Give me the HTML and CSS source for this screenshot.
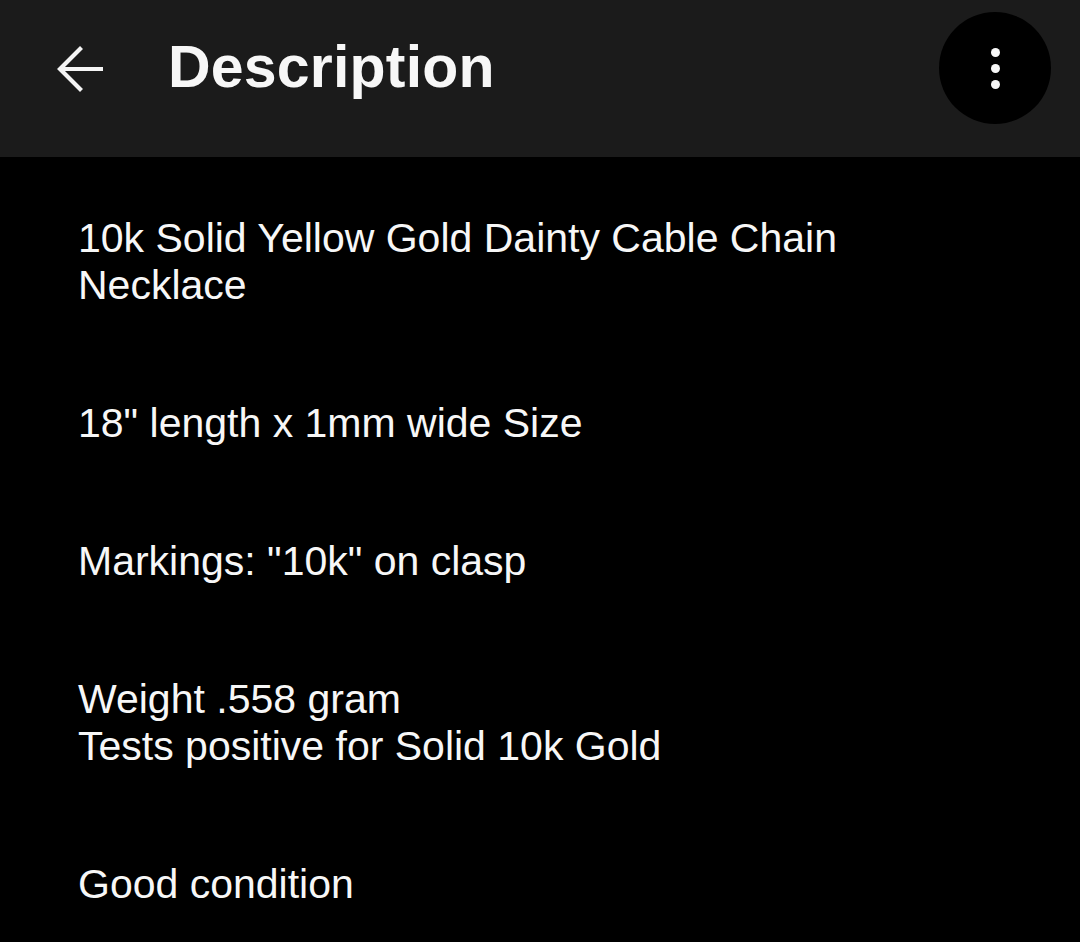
FILE: index.html
```html
<!DOCTYPE html>
<html lang="en">
<head>
<meta charset="utf-8">
<title>Description</title>
<link rel="stylesheet" href="styles.css">
</head>
<body>
<header class="topbar">
  <button class="back" aria-label="Back">
    <svg width="48" height="48" viewBox="0 0 48 48" fill="none" stroke="#f5f5f5" stroke-width="4.2" stroke-linecap="butt" stroke-linejoin="miter">
      <path d="M3 25 H46"/>
      <path d="M24.5 3.5 L3 25 L24.5 46.5"/>
    </svg>
  </button>
  <h1 class="title">Description</h1>
  <button class="more" aria-label="More options">
    <span class="dot"></span><span class="dot"></span><span class="dot"></span>
  </button>
</header>
<main class="content">
  <p>10k Solid Yellow Gold Dainty Cable Chain Necklace</p>
  <p>18" length x 1mm wide Size</p>
  <p>Markings: "10k" on clasp</p>
  <p>Weight .558 gram<br>Tests positive for Solid 10k Gold</p>
  <p>Good condition</p>
</main>
</body>
</html>
```
FILE: styles.css
```css
html, body {
  margin: 0;
  padding: 0;
  background: #000;
  width: 1080px;
  height: 942px;
  overflow: hidden;
}
body {
  font-family: "Liberation Sans", Arial, sans-serif;
  color: #f7f7f7;
}
.topbar {
  box-sizing: border-box;
  height: 157px;
  background: #1b1b1b;
  display: flex;
  align-items: flex-start;
  padding: 12px 29px 0 57px;
}
.back {
  width: 48px;
  height: 112px;
  padding: 0;
  margin: 0;
  border: 0;
  background: transparent;
  display: flex;
  align-items: center;
}
.back svg { display: block; }
.title {
  flex: 1;
  margin: 0 0 0 63px;
  height: 112px;
  display: flex;
  align-items: center;
  font-size: 59px;
  font-weight: 700;
  letter-spacing: 0.2px;
  color: #f7f7f7;
  padding-bottom: 2px;
  box-sizing: border-box;
}
.more {
  width: 112px;
  height: 112px;
  border-radius: 50%;
  background: #000;
  border: 0;
  padding: 0;
  display: flex;
  flex-direction: column;
  align-items: center;
  justify-content: center;
  gap: 7px;
}
.dot {
  width: 9px;
  height: 9px;
  border-radius: 50%;
  background: #f7f7f7;
}
.content {
  padding: 58px 80px 0 78px;
}
.content p {
  margin: 0 0 91px 0;
  font-size: 41px;
  line-height: 47px;
}
.content p:last-child {
  margin-bottom: 0;
}
```
